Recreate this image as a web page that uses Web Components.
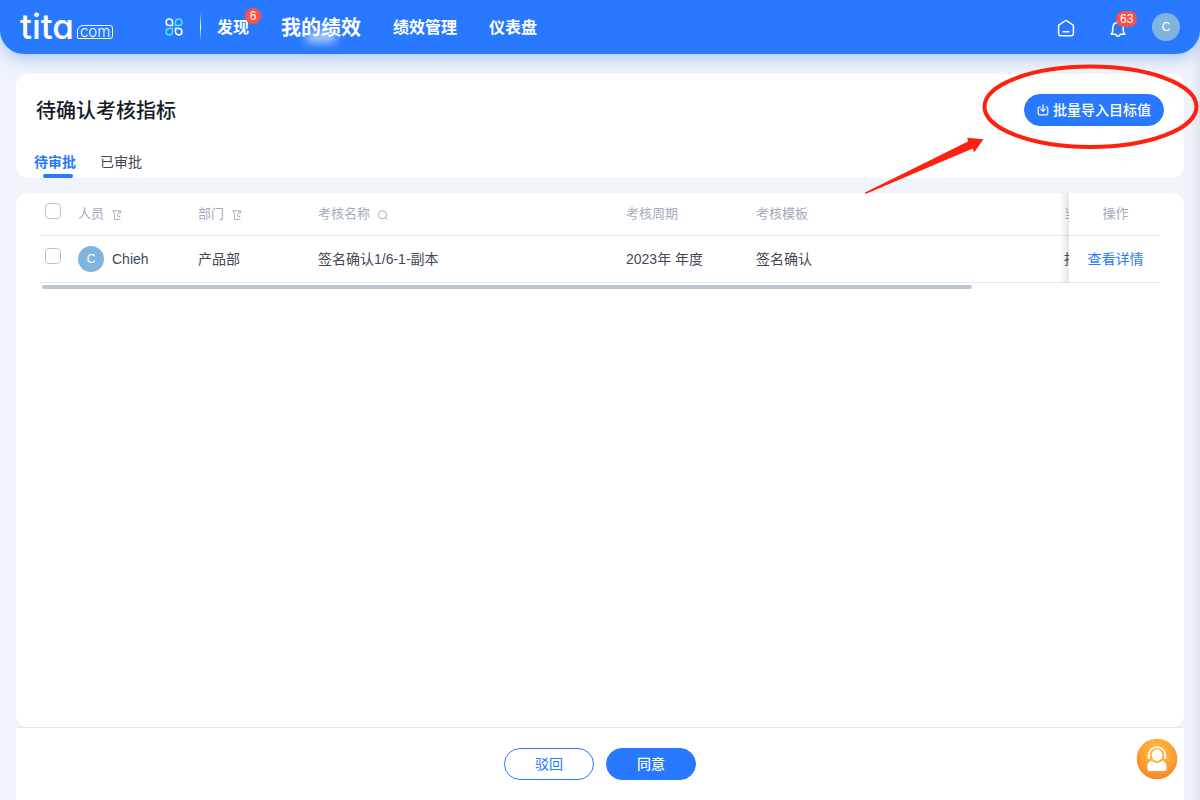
<!DOCTYPE html>
<html lang="zh-CN">
<head>
<meta charset="utf-8">
<title>待确认考核指标</title>
<style>
body { margin: 0; background: #f0f3fa; color: #3f4755; font: 14px/20px "Liberation Sans", "Noto Sans CJK SC", sans-serif; }
</style>
</head>
<body>
<perf-page></perf-page>
<script>
const define = (name, html, init) => customElements.define(name, class extends HTMLElement {
  constructor() {
    super();
    const t = document.createElement('template');
    t.innerHTML = html;
    this.attachShadow({ mode: 'open' }).append(t.content.cloneNode(true));
    if (init) init.call(this, this.shadowRoot);
  }
});

define('tita-logo', `
<style>
:host { display: flex; align-items: flex-end; color: #fff; height: 30px; width: 98px; }
.name { font: 500 35px/32px Inter, sans-serif; font-feature-settings: "cv11"; }
.com { box-sizing: border-box; height: 14px; border: 1px solid #fff; border-radius: 6px 3px 3px 1px; padding: 0 2px; font: 300 15px/11px Inter, sans-serif; margin: 0 0 3px 3px; }
</style>
<span class="name">tita</span><span class="com">com</span>`);

define('count-badge', `
<style>
:host { display: block; box-sizing: border-box; min-width: 16px; height: 16px; padding: 0 4px; border-radius: 8px; background: #ff4f46; color: #fff; font: 12px/16px "Liberation Sans", sans-serif; text-align: center; }
</style><slot></slot>`);

define('user-avatar', `
<style>
:host { display: flex; align-items: center; justify-content: center; flex: none; width: 26px; height: 26px; border-radius: 50%; background: #7fb4de; color: #fff; font-size: 12px; }
:host([large]) { width: 28px; height: 28px; }
</style><slot></slot>`);

define('nav-link', `
<style>
:host { display: block; position: relative; }
a { color: #fff; text-decoration: none; font-size: 16px; line-height: 24px; font-weight: 700; white-space: nowrap; }
:host([current]) a { font-size: 20px; position: relative; }
:host([current])::before { content: ""; position: absolute; left: 50%; bottom: -3px; width: 32px; height: 12px; margin-left: -16px; border-radius: 6px; background: #a9c8ff; filter: blur(4px); }
::slotted(count-badge) { position: absolute; right: -12px; top: -8px; }
</style>
<a href="#"><slot></slot></a><slot name="badge"></slot>`);

define('app-header', `
<style>
:host { display: flex; align-items: center; box-sizing: border-box; height: 54px; padding: 0 20px; border-radius: 0 0 24px 24px; background: #2879ff; box-shadow: 0 4px 16px rgba(40,121,255,.38); }
button { display: block; position: relative; border: 0; padding: 0; background: none; }
svg { display: block; }
.apps { margin-left: 47px; }
.rule { width: 1px; height: 28px; margin: 0 16px 0 17px; background: linear-gradient(transparent, #fff, transparent); }
nav { display: flex; align-items: center; gap: 32px; padding-top: 2px; }
.tools { display: flex; align-items: center; gap: 24px; margin-left: auto; }
.icons { display: flex; gap: 32px; padding-top: 2px; }
.tools count-badge { position: absolute; left: 8px; top: -7px; }
</style>
<tita-logo></tita-logo>
<button class="apps" aria-label="应用"><svg width="18" height="18" viewBox="0 0 18 18" fill="none" stroke-width="1.5">
<path stroke="#fff" d="M7.5 7.5H4.2A3.2 3.2 0 1 1 7.5 4.2zM10.5 10.5H13.8A3.2 3.2 0 1 1 10.5 13.8z"/>
<path stroke="#4fe5ff" d="M10.5 7.5V4.2A3.2 3.2 0 1 1 13.8 7.5zM7.5 10.5V13.8A3.2 3.2 0 1 1 4.2 10.5z"/></svg></button>
<span class="rule"></span>
<nav>
<nav-link>发现<count-badge slot="badge">6</count-badge></nav-link>
<nav-link current>我的绩效</nav-link>
<nav-link>绩效管理</nav-link>
<nav-link>仪表盘</nav-link>
</nav>
<div class="tools">
<div class="icons">
<button aria-label="首页"><svg width="20" height="20" viewBox="0 0 20 20" fill="none" stroke="#fff" stroke-width="1.5" stroke-linejoin="round" stroke-linecap="round"><path d="M2.6 8.2Q2.6 7.4 3.2 6.9L8.9 3Q10 2.2 11.1 3L16.8 6.9Q17.4 7.4 17.4 8.2V15.5Q17.4 17.8 15.1 17.8H4.9Q2.6 17.8 2.6 15.5zM7.2 13.8h5.6"/></svg></button>
<button aria-label="通知"><svg width="20" height="20" viewBox="0 0 20 20" fill="none" stroke="#fff" stroke-width="1.5" stroke-linejoin="round" stroke-linecap="round"><path d="M3.3 16.2C5 14.8 4.8 13 4.8 10C4.8 6.6 6.8 4.5 10 4.5S15.2 6.6 15.2 10C15.2 13 15 14.8 16.7 16.2H12.2Q11.7 18.2 10 18.2T7.8 16.2zM10 4.5V3"/></svg><count-badge>63</count-badge></button>
</div>
<user-avatar large>C</user-avatar>
</div>`);

define('pill-button', `
<style>
:host { display: block; }
button { display: flex; align-items: center; justify-content: center; gap: 4px; box-sizing: border-box; height: 32px; min-width: 90px; padding: 0 12px; border: 1px solid #2879ff; border-radius: 16px; background: #2879ff; color: #fff; font: inherit; font-weight: 500; white-space: nowrap; }
:host([outline]) button { background: #fff; color: #2879ff; font-weight: 400; }
</style><button><slot name="icon"></slot><slot></slot></button>`);

define('page-heading', `
<style>
:host { display: block; background: #fff; border-radius: 12px; }
.top { display: flex; align-items: flex-start; justify-content: space-between; padding: 20px 20px 0; }
h1 { margin: 0; color: #141c28; font-size: 20px; line-height: 34px; font-weight: 500; }
nav { display: flex; gap: 24px; padding: 24px 18px 0; }
a { display: block; position: relative; height: 26px; color: #3f4755; text-decoration: none; }
a[aria-current] { color: #2879ff; font-weight: 700; }
a[aria-current]::after { content: ""; position: absolute; left: 9px; bottom: 0; width: 30px; height: 4px; border-radius: 2px; background: #2879ff; }
svg { display: block; }
</style>
<div class="top"><h1>待确认考核指标</h1>
<pill-button><svg slot="icon" width="12" height="12" viewBox="0 0 12 12" fill="none" stroke="#fff" stroke-width="1.2" stroke-linecap="round" stroke-linejoin="round"><path d="M3.2 3H2.6Q1.2 3 1.2 4.4V9.4Q1.2 10.8 2.6 10.8H9.4Q10.8 10.8 10.8 9.4V4.4Q10.8 3 9.4 3H8.8M6 .8V7M3.8 5.2L6 7.4L8.2 5.2"/></svg>批量导入目标值</pill-button></div>
<nav><a href="#" aria-current="page">待审批</a><a href="#">已审批</a></nav>`);

const filter = '<svg width="9" height="10" viewBox="0 0 9 10" fill="none" stroke="#a3abba"><path d="M8.3 3L8.5 .8H.6L2.6 4V9.4H8.4M8.5 .8L5.8 4V6.4H8.2"/></svg>';
define('review-table', `
<style>
:host { display: block; padding: 0 24px; }
.scroll { overflow-x: auto; scrollbar-width: none; }
table { width: 1344px; table-layout: fixed; border-collapse: separate; border-spacing: 0; }
th, td { box-sizing: border-box; padding: 0 8px; text-align: left; border-bottom: 1px solid #e6e9ef; white-space: nowrap; }
th { height: 43px; color: #a3abba; font-size: 13px; font-weight: 400; }
td { height: 47px; color: #3f4755; }
.check { padding: 0 5px; }
input { appearance: none; display: block; box-sizing: border-box; width: 16px; height: 16px; margin: 0 0 6px; border: 1px solid #bcc4d3; border-radius: 4px; background: #fff; }
.label, .person { display: flex; align-items: center; gap: 8px; }
.label svg { padding-top: 2px; }
.ops { position: sticky; right: 0; padding: 0 0 0 2px; text-align: center; background: #fff; }
.ops::before { content: ""; position: absolute; right: 100%; top: 0; bottom: -1px; width: 10px; background: linear-gradient(to left, rgba(60,75,110,.14), transparent); }
a { color: #2879ff; text-decoration: none; }
.bar { width: 83%; height: 4px; margin: 2px; border-radius: 2px; background: #bcc4d3; }
</style>
<div class="scroll"><table>
<colgroup><col style="width:30px"><col style="width:120px"><col style="width:120px"><col style="width:308px"><col style="width:130px"><col style="width:308px"><col><col style="width:91px"></colgroup>
<thead><tr><th class="check"><input type="checkbox" aria-label="全选"></th><th><span class="label">人员${filter}</span></th><th><span class="label">部门${filter}</span></th><th><span class="label">考核名称<svg width="10" height="10" viewBox="0 0 10 10" fill="none" stroke="#a3abba"><circle cx="4.6" cy="4.8" r="4"/><path d="M7.4 7.6L9.4 9.6"/></svg></span></th><th>考核周期</th><th>考核模板</th><th>当</th><th class="ops">操作</th></tr></thead>
<tbody><tr><td class="check"><input type="checkbox" aria-label="选择 Chieh"></td><td><span class="person"><user-avatar>C</user-avatar>Chieh</span></td><td>产品部</td><td>签名确认1/6-1-副本</td><td>2023年 年度</td><td>签名确认</td><td>指</td><td class="ops"><a href="#">查看详情</a></td></tr></tbody>
</table></div>
<div class="bar"></div>`);

define('action-footer', `
<style>
:host { display: flex; justify-content: center; gap: 12px; padding: 20px; border-top: 1px solid #e6e9ef; background: #fff; }
</style>
<pill-button outline>驳回</pill-button><pill-button>同意</pill-button>`);

define('help-button', `
<style>
:host { display: block; }
button { display: block; padding: 0; border: 0; background: none; }
svg { display: block; }
</style>
<button aria-label="客服"><svg width="42" height="42" viewBox="0 0 42 42"><defs><radialGradient id="g" cx=".5" cy=".35" r=".65"><stop offset="0" stop-color="#ffc24d"/><stop offset=".55" stop-color="#ffa533"/><stop offset="1" stop-color="#f5862a"/></radialGradient></defs><circle cx="21" cy="21" r="20.3" fill="url(#g)"/><ellipse cx="21" cy="17.2" rx="5.2" ry="5.9" fill="#fff"/><path d="M12.9 18V17A8.1 8.1 0 0 1 29.1 17V18" fill="none" stroke="#fff" stroke-width="1.5"/><rect x="11.6" y="16" width="2.4" height="5" rx="1.2" fill="#fff"/><rect x="28" y="16" width="2.4" height="5" rx="1.2" fill="#fff"/><path d="M15.3 22.8Q21 27 26.7 22.8Q30.5 24.2 30.5 28.5V31Q30.5 33 28.7 33H13.3Q11.5 33 11.5 31V28.5Q11.5 24.2 15.3 22.8z" fill="#fff"/></svg></button>`);

define('callout-mark', `
<style>
:host { display: block; pointer-events: none; }
svg { display: block; }
</style>
<svg width="340" height="140" viewBox="0 0 340 140"><ellipse cx="230.5" cy="46.7" rx="106" ry="40.2" fill="none" stroke="#ff2010" stroke-width="4"/><path d="M5 132.5L108 81.5L107.3 77.7L123.5 79.3L114 92.5L112.8 88.5L5.5 134z" fill="#ff2010"/></svg>`);

define('perf-page', `
<style>
:host { display: flex; flex-direction: column; min-height: 100vh; position: relative; background: linear-gradient(to left, #e2e5eb, #f0f3fa 10px); }
main { flex: 1; display: flex; flex-direction: column; padding: 20px 16px 0; }
review-table { flex: 1; margin-top: 15px; background: #fff; border-radius: 12px; }
help-button { position: fixed; right: 22px; bottom: 20px; }
callout-mark { position: absolute; right: 0; top: 60px; }
</style>
<app-header></app-header>
<main><page-heading></page-heading><review-table></review-table><action-footer></action-footer></main>
<help-button></help-button><callout-mark></callout-mark>`);
</script>
</body>
</html>
